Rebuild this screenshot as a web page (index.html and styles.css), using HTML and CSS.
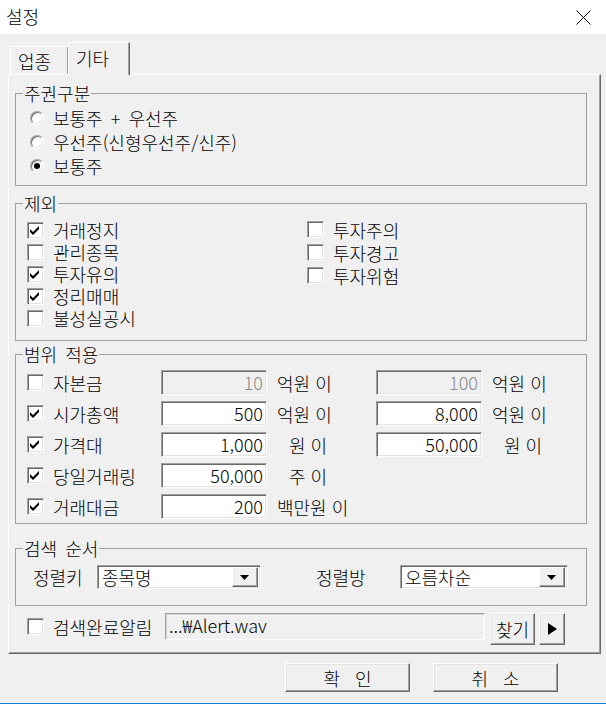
FILE: index.html
```html
<!DOCTYPE html>
<html lang="ko">
<head>
<meta charset="utf-8">
<title>설정</title>
<link rel="stylesheet" href="styles.css">
</head>
<body>
<div class="window">
  <header class="titlebar">
    <span class="title">설정</span>
    <svg class="close" width="15" height="15" viewBox="0 0 15 15"><path d="M0.5 0.5 L14.5 14.5 M14.5 0.5 L0.5 14.5" stroke="#000" stroke-width="1" fill="none"/></svg>
  </header>
  <main class="client">
    <div class="tabs">
      <div class="tab">업종</div>
      <div class="tab active">기타</div>
    </div>
    <div class="panel">
      <fieldset class="group g-stock">
        <legend>주권구분</legend>
        <div class="radios">
          <div class="opt"><span class="radio"></span><span class="lbl">보통주 + 우선주</span></div>
          <div class="opt"><span class="radio"></span><span class="lbl">우선주(신형우선주/신주)</span></div>
          <div class="opt"><span class="radio on"></span><span class="lbl">보통주</span></div>
        </div>
      </fieldset>

      <fieldset class="group g-excl">
        <legend>제외</legend>
        <div class="excl">
          <div class="col col-left">
            <div class="opt"><span class="cb on"><svg width="17" height="17" viewBox="0 0 17 17"><polygon points="3,7 6,10 12,4 12,7 6,13 3,10" fill="#000"/></svg></span><span class="lbl">거래정지</span></div>
            <div class="opt"><span class="cb"></span><span class="lbl">관리종목</span></div>
            <div class="opt"><span class="cb on"><svg width="17" height="17" viewBox="0 0 17 17"><polygon points="3,7 6,10 12,4 12,7 6,13 3,10" fill="#000"/></svg></span><span class="lbl">투자유의</span></div>
            <div class="opt"><span class="cb on"><svg width="17" height="17" viewBox="0 0 17 17"><polygon points="3,7 6,10 12,4 12,7 6,13 3,10" fill="#000"/></svg></span><span class="lbl">정리매매</span></div>
            <div class="opt"><span class="cb"></span><span class="lbl">불성실공시</span></div>
          </div>
          <div class="col col-right">
            <div class="opt"><span class="cb"></span><span class="lbl">투자주의</span></div>
            <div class="opt"><span class="cb"></span><span class="lbl">투자경고</span></div>
            <div class="opt"><span class="cb"></span><span class="lbl">투자위험</span></div>
          </div>
        </div>
      </fieldset>

      <fieldset class="group g-range">
        <legend>범위 적용</legend>
        <div class="range">
          <div class="rrow">
            <div class="opt"><span class="cb"></span><span class="lbl">자본금</span></div>
            <span class="edit disabled">10</span>
            <span class="unit">억원 이</span>
            <span class="edit disabled">100</span>
            <span class="unit">억원 이</span>
          </div>
          <div class="rrow">
            <div class="opt"><span class="cb on"><svg width="17" height="17" viewBox="0 0 17 17"><polygon points="3,7 6,10 12,4 12,7 6,13 3,10" fill="#000"/></svg></span><span class="lbl">시가총액</span></div>
            <span class="edit">500</span>
            <span class="unit">억원 이</span>
            <span class="edit">8,000</span>
            <span class="unit">억원 이</span>
          </div>
          <div class="rrow">
            <div class="opt"><span class="cb on"><svg width="17" height="17" viewBox="0 0 17 17"><polygon points="3,7 6,10 12,4 12,7 6,13 3,10" fill="#000"/></svg></span><span class="lbl">가격대</span></div>
            <span class="edit">1,000</span>
            <span class="unit indent">원 이</span>
            <span class="edit">50,000</span>
            <span class="unit indent">원 이</span>
          </div>
          <div class="rrow">
            <div class="opt"><span class="cb on"><svg width="17" height="17" viewBox="0 0 17 17"><polygon points="3,7 6,10 12,4 12,7 6,13 3,10" fill="#000"/></svg></span><span class="lbl">당일거래링</span></div>
            <span class="edit">50,000</span>
            <span class="unit indent">주 이</span>
          </div>
          <div class="rrow">
            <div class="opt"><span class="cb on"><svg width="17" height="17" viewBox="0 0 17 17"><polygon points="3,7 6,10 12,4 12,7 6,13 3,10" fill="#000"/></svg></span><span class="lbl">거래대금</span></div>
            <span class="edit">200</span>
            <span class="unit">백만원 이</span>
          </div>
        </div>
      </fieldset>

      <fieldset class="group g-order">
        <legend>검색 순서</legend>
        <div class="order">
          <span class="olabel key">정렬키</span>
          <div class="combo key-combo"><span class="ctext">종목명</span><span class="cbtn"><svg width="9" height="5" viewBox="0 0 9 5"><polygon points="0,0 9,0 4.5,5" fill="#000"/></svg></span></div>
          <span class="olabel dir">정렬방</span>
          <div class="combo dir-combo"><span class="ctext">오름차순</span><span class="cbtn"><svg width="9" height="5" viewBox="0 0 9 5"><polygon points="0,0 9,0 4.5,5" fill="#000"/></svg></span></div>
        </div>
      </fieldset>

      <div class="alarm">
        <span class="cb"></span>
        <span class="lbl alarm-lbl">검색완료알림</span>
        <span class="path">...₩Alert.wav</span>
        <span class="btn find">찾기</span>
        <span class="btn play"><svg width="9" height="12" viewBox="0 0 9 12"><polygon points="0,0 9,6 0,12" fill="#000"/></svg></span>
      </div>
    </div>
    <div class="actions">
      <span class="btn action">확&nbsp;&nbsp;&nbsp;인</span>
      <span class="btn action">취&nbsp;&nbsp;&nbsp;소</span>
    </div>
  </main>
</div>
</body>
</html>
```

FILE: styles.css
```css
* { box-sizing: border-box; }
html, body { margin: 0; padding: 0; }
body {
  width: 606px;
  height: 704px;
  overflow: hidden;
  background: #f0f0f0;
  color: #000;
  font-family: "Noto Sans CJK KR", "Noto Sans", sans-serif;
  font-weight: 300;
  font-size: 18px;
  line-height: 20px;
  word-spacing: 3px;
}
.window {
  width: 606px;
  height: 704px;
  display: flex;
  flex-direction: column;
  border-bottom: 1px solid #1883d7;
}
.titlebar {
  height: 34px;
  flex: none;
  background: #fff;
  display: flex;
  align-items: center;
  justify-content: space-between;
  padding: 0 15px 0 6px;
}
.title { font-size: 18px; line-height: 20px; margin-top: -2px; }
.close { display: block; margin-top: 1px; }

.client { flex: 1; padding: 8px 0 0 8px; }

.tabs {
  height: 32px;
  display: flex;
  align-items: flex-end;
  padding-left: 2px;
}
.tab {
  width: 59px;
  height: 28px;
  border: 1px solid;
  border-color: #fff #696969 transparent #fff;
  border-bottom: none;
  box-shadow: inset -1px 0 0 #a0a0a0;
  display: flex;
  align-items: center;
  padding-left: 7px;
}
.tab.active {
  width: 62px;
  height: 33px;
  margin-left: -1px;
  margin-bottom: -1px;
  background: #f0f0f0;
  position: relative;
  z-index: 1;
  padding-left: 7px;
  padding-bottom: 3px;
}

.panel {
  width: 593px;
  height: 580px;
  border: 1px solid;
  border-color: #fff #696969 #696969 #fff;
  box-shadow: inset -1px -1px 0 #a0a0a0;
  padding: 10px 0 8px 6px;
  display: flex;
  flex-direction: column;
}

.group {
  margin: 0;
  padding: 0;
  width: 572px;
  min-width: 0;
  border: 1px solid #a0a0a0;
  flex: none;
}
.group legend {
  margin-left: 7px;
  padding: 0 1px;
  line-height: 16px;
  font-size: 18px;
}
.g-stock { height: 101px; }
.g-excl { height: 146px; margin-top: 9px; }
.g-range { height: 178px; margin-top: 5px; }
.g-order { height: 66px; margin-top: 16px; }

.opt { display: flex; align-items: center; }
.lbl { line-height: 20px; white-space: nowrap; }

/* radio buttons */
.radios { padding: 5px 0 0 14px; display: flex; flex-direction: column; }
.radios .opt { height: 24px; }
.radio {
  width: 14px;
  height: 14px;
  border-radius: 50%;
  border: 1px solid;
  border-color: #a0a0a0 #fff #fff #a0a0a0;
  box-shadow: inset 1px 1px 0 #696969, inset -1px -1px 0 #e3e3e3;
  background: #fff;
  margin-right: 9px;
  flex: none;
  display: flex;
  align-items: center;
  justify-content: center;
}
.radio.on::after {
  content: "";
  width: 6px;
  height: 6px;
  border-radius: 50%;
  background: #000;
}

/* checkbox */
.cb {
  width: 17px;
  height: 17px;
  flex: none;
  border: 1px solid;
  border-color: #a0a0a0 #fff #fff #a0a0a0;
  box-shadow: inset 1px 1px 0 #696969, inset -1px -1px 0 #e3e3e3;
  background: #fff;
  margin-right: 9px;
  position: relative;
}
.cb svg { position: absolute; left: -1px; top: -1px; }

/* exclusions */
.excl { display: grid; grid-template-columns: 280px 1fr; padding: 8px 0 0 11px; }
.col { display: flex; flex-direction: column; }
.col-left .opt { height: 22px; }
.col-right { margin-top: -1px; }
.col-right .opt { height: 23px; }

/* range */
.range { padding: 5px 0 0 11px; display: flex; flex-direction: column; }
.rrow {
  display: grid;
  grid-template-columns: 134px 106px 109px 106px 1fr;
  height: 31px;
  align-items: center;
}
.edit {
  height: 25px;
  border: 1px solid;
  border-color: #a0a0a0 #fff #fff #a0a0a0;
  box-shadow: inset 1px 1px 0 #696969, inset -1px -1px 0 #e3e3e3;
  background: #fff;
  text-align: right;
  padding-right: 3px;
  line-height: 22px;
  word-spacing: 0;
}
.edit.disabled { background: #f0f0f0; color: #8a8a8a; }
.unit { padding-left: 10px; white-space: nowrap; word-spacing: 0; }
.unit.indent { padding-left: 22px; }

/* order */
.order { display: flex; align-items: center; padding: 9px 0 0 17px; }
.olabel.key { width: 64px; }
.olabel.dir { width: 84px; margin-left: 55px; }
.combo {
  height: 24px;
  border: 1px solid;
  border-color: #a0a0a0 #fff #fff #a0a0a0;
  box-shadow: inset 1px 1px 0 #696969, inset -1px -1px 0 #e3e3e3;
  background: #fff;
  display: flex;
  align-items: center;
  justify-content: space-between;
  padding: 2px 2px 2px 4px;
}
.key-combo { width: 164px; }
.dir-combo { width: 168px; }
.cbtn {
  width: 26px;
  height: 20px;
  background: #f0f0f0;
  border: 1px solid;
  border-color: #fff #696969 #696969 #fff;
  box-shadow: inset -1px -1px 0 #a0a0a0;
  display: flex;
  align-items: center;
  justify-content: center;
  padding-right: 2px;
}

/* alarm row */
.alarm {
  margin-top: 7px;
  height: 32px;
  display: flex;
  align-items: flex-start;
  padding-left: 12px;
}
.alarm .cb { margin-top: 5px; }
.alarm-lbl { width: 112px; margin-top: 4px; }
.path {
  width: 320px;
  height: 27px;
  border: 1px solid;
  border-color: #a0a0a0 #fff #fff #a0a0a0;
  box-shadow: inset 1px 1px 0 #d4d4d4;
  padding-left: 3px;
  line-height: 23px;
  word-spacing: 0;
}

.btn {
  background: #f0f0f0;
  border: 1px solid;
  border-color: #fff #696969 #696969 #fff;
  box-shadow: inset -1px -1px 0 #a0a0a0, inset 1px 1px 0 #e3e3e3;
  display: flex;
  align-items: center;
  justify-content: center;
  word-spacing: 0;
}
.find { width: 45px; height: 32px; margin-left: 5px; }
.play { width: 26px; height: 32px; margin-left: 4px; }

.actions {
  margin-top: 9px;
  display: flex;
  justify-content: flex-end;
  gap: 23px;
  padding-right: 48px;
}
.action { width: 125px; height: 29px; }
```
